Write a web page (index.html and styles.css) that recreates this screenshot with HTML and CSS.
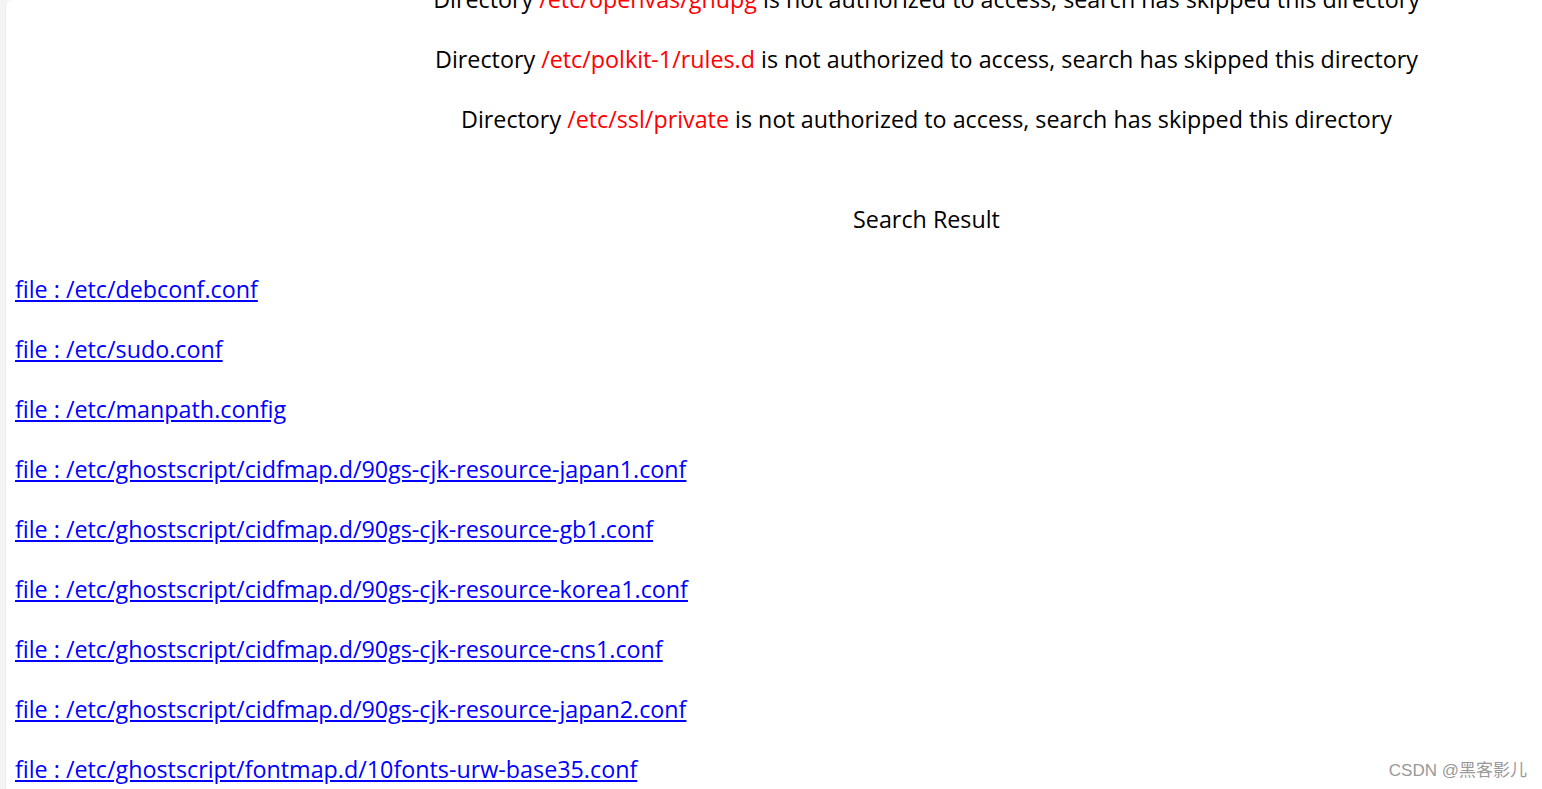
FILE: index.html
```html
<!DOCTYPE html>
<html lang="en">
<head>
  <meta charset="UTF-8">
  <meta name="viewport" content="width=device-width, initial-scale=1.0">
  <title>Search Result</title>
  <link rel="stylesheet" href="styles.css">
</head>
<body>
  <div class="panel">
    <div class="skipped">
      <p class="dir">Directory <span class="path">/etc/openvas/gnupg</span> is not authorized to access, search has skipped this directory</p>
      <p class="dir">Directory <span class="path">/etc/polkit-1/rules.d</span> is not authorized to access, search has skipped this directory</p>
      <p class="dir">Directory <span class="path">/etc/ssl/private</span> is not authorized to access, search has skipped this directory</p>
      <p class="title">Search Result</p>
    </div>
    <div class="results">
      <p><a href="#">file : /etc/debconf.conf</a></p>
      <p><a href="#">file : /etc/sudo.conf</a></p>
      <p><a href="#">file : /etc/manpath.config</a></p>
      <p><a href="#">file : /etc/ghostscript/cidfmap.d/90gs-cjk-resource-japan1.conf</a></p>
      <p><a href="#">file : /etc/ghostscript/cidfmap.d/90gs-cjk-resource-gb1.conf</a></p>
      <p><a href="#">file : /etc/ghostscript/cidfmap.d/90gs-cjk-resource-korea1.conf</a></p>
      <p><a href="#">file : /etc/ghostscript/cidfmap.d/90gs-cjk-resource-cns1.conf</a></p>
      <p><a href="#">file : /etc/ghostscript/cidfmap.d/90gs-cjk-resource-japan2.conf</a></p>
      <p><a href="#">file : /etc/ghostscript/fontmap.d/10fonts-urw-base35.conf</a></p>
    </div>
  </div>
  <div class="watermark">CSDN @黑客影儿</div>
</body>
</html>
```

FILE: styles.css
```css
html, body {
  margin: 0;
  height: 100%;
  overflow: hidden;
}
body {
  background-color: #f4f4f4;
  font-family: "Open Sans", "Noto Sans", sans-serif;
  font-size: 23.3px;
  color: #000;
  padding-left: 5px;
}
.panel {
  display: flow-root;
  background-color: #fff;
  border-left: 1px solid #ececec;
  border-top-left-radius: 6px;
  min-height: 100%;
  box-sizing: border-box;
  padding-left: 9px;
}
p {
  margin: 0;
  height: 60px;
  line-height: 60px;
  white-space: nowrap;
}
.skipped {
  margin-top: -31px;
  padding-left: 296px;
  text-align: center;
}
.path {
  color: #f00;
}
.title {
  margin-top: 40px;
}
.results {
  margin-top: 10px;
}
.results a {
  color: #00f;
}
.watermark {
  position: absolute;
  right: 15px;
  bottom: 8px;
  font-family: "Liberation Sans", "Noto Sans CJK SC", sans-serif;
  font-size: 17px;
  color: #999;
}
```
